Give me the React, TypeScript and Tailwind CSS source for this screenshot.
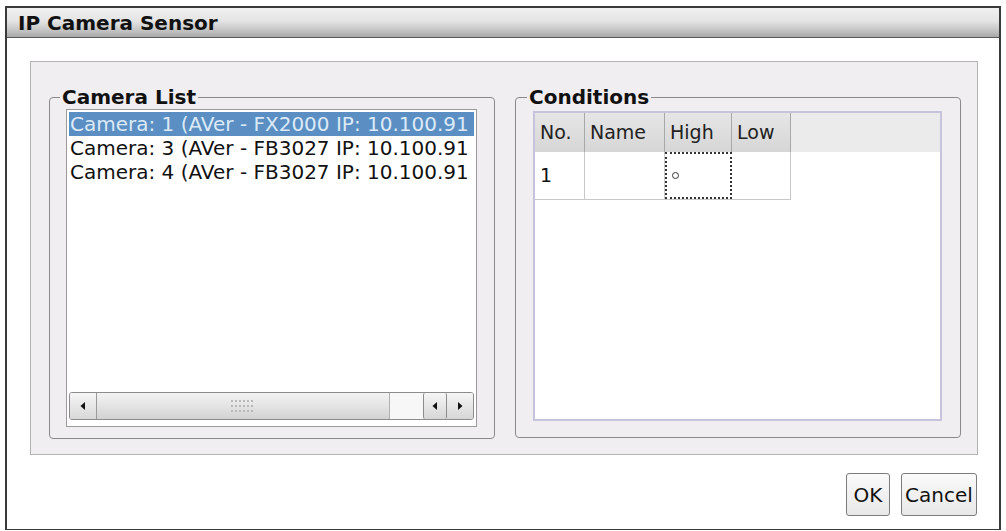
const font = "font-['DejaVu_Sans',Verdana,sans-serif]";

const cameras = [
  "Camera: 1 (AVer - FX2000 IP: 10.100.91",
  "Camera: 3 (AVer - FB3027 IP: 10.100.91",
  "Camera: 4 (AVer - FB3027 IP: 10.100.91",
];

function Arrow({ dir }: { dir: "l" | "r" }) {
  return (
    <svg width="8" height="10" viewBox="0 0 8 10">
      {dir === "l" ? <path d="M6 1 L1.5 5 L6 9 Z" fill="#111" /> : <path d="M2 1 L6.5 5 L2 9 Z" fill="#111" />}
    </svg>
  );
}

function Grip() {
  return (
    <svg width="26" height="16" viewBox="0 0 26 16">
      {[0, 1, 2].map((r) =>
        [0, 1, 2, 3, 4, 5].map((c) => (
          <rect key={`${r}-${c}`} x={1 + c * 4} y={2 + r * 5} width="2" height="2" fill="#b8b8b8" />
        ))
      )}
    </svg>
  );
}

function ScrollBar() {
  return (
    <div className="mt-auto mb-[4px] h-[28px] flex border border-[#8c8c8c] rounded-[3px] bg-[#f4f4f4] overflow-hidden">
      <div className="w-[27px] flex items-center justify-center border-r border-[#9a9a9a] bg-gradient-to-b from-[#f6f6f6] to-[#d8d8d8]">
        <Arrow dir="l" />
      </div>
      <div className="w-[293px] flex items-center justify-center border-r border-[#b0b0b0] bg-gradient-to-b from-[#f2f2f2] via-[#e4e4e4] to-[#d2d2d2]">
        <Grip />
      </div>
      <div className="flex-1 bg-[#f7f7f7]" />
      <div className="w-[24px] flex items-center justify-center border-x border-[#8c8c8c] bg-gradient-to-b from-[#f6f6f6] to-[#d6d6d6] rounded-[2px]">
        <Arrow dir="l" />
      </div>
      <div className="w-[26px] flex items-center justify-center bg-gradient-to-b from-[#f6f6f6] to-[#d6d6d6]">
        <Arrow dir="r" />
      </div>
    </div>
  );
}

function Group({ title, children, className }: { title: string; children: React.ReactNode; className?: string }) {
  return (
    <fieldset className={`w-[446px] border border-[#8a8a8a] rounded-[4px] ${className ?? ""}`}>
      <legend className="ml-[-6px] px-[2px] text-[20px] leading-[24px] font-bold text-[#111]">{title}</legend>
      {children}
    </fieldset>
  );
}

export default function App() {
  return (
    <div className={`w-[1006px] h-[531px] bg-white pt-[6px] pl-[5px] ${font}`}>
      <div className="w-[996px] h-[524px] border-x-2 border-t-2 border-b border-[#3a3a3a] flex flex-col">
        <div className="h-[30px] border-b border-[#5a5a5a] bg-[linear-gradient(to_bottom,#f0f0f0_0%,#e4e4e4_45%,#c6c6c6_75%,#a8a8a8_100%)] flex items-center pl-[11px]">
          <span className="text-[20px] font-bold text-[#111] leading-none">IP Camera Sensor</span>
        </div>

        <div className="ml-[23px] mt-[23px] w-[948px] h-[394px] bg-[#f0eef1] border border-[#b4b4b4] flex items-start gap-[20px] pl-[18px] pt-[23px]">
          <Group title="Camera List" className="pl-[16px] pb-[11px]">
            <div className="w-[411px] h-[318px] border border-[#9a9a9a] bg-white p-[2px] flex flex-col">
              {cameras.map((c, i) => (
                <div
                  key={c}
                  className={`h-[24px] px-[1px] text-[20px] leading-[24px] whitespace-nowrap ${
                    i === 0 ? "bg-[#5b8ec2] text-[#dceaf7]" : "text-[#111]"
                  }`}
                >
                  {c}
                </div>
              ))}
              <ScrollBar />
            </div>
          </Group>

          <Group title="Conditions" className="pl-[17px] pb-[16px]">
            <div className="mt-[2px] w-[409px] h-[310px] border-2 border-[#c6c4dc] bg-white flex flex-col">
              <div className="flex h-[39px] bg-[#ebebeb]">
                {[
                  ["No.", "w-[50px]"],
                  ["Name", "w-[80px]"],
                  ["High", "w-[67px]"],
                  ["Low", "w-[59px]"],
                ].map(([t, w]) => (
                  <div
                    key={t}
                    className={`${w} h-full border-r border-[#a8a8a8] bg-gradient-to-b from-[#e6e6e6] to-[#d6d6d6] flex items-center pl-[5px] text-[19px] text-[#222]`}
                  >
                    {t}
                  </div>
                ))}
              </div>
              <div className="flex h-[48px] w-[256px] border-b border-[#c8c8c8]">
                <div className="w-[50px] h-full border-r border-[#c8c8c8] flex items-center pl-[5px] text-[19px] text-[#111]">1</div>
                <div className="w-[80px] h-full border-r border-[#c8c8c8]" />
                <div className="w-[67px] h-full border-2 border-dotted border-[#333] flex items-center pl-[5px]">
                  <span className="w-[7px] h-[7px] rounded-full border border-[#333]" />
                </div>
                <div className="w-[59px] h-full border-r border-[#c8c8c8]" />
              </div>
            </div>
          </Group>
        </div>

        <div className="flex justify-end gap-[11px] pr-[22px] mt-[18px]">
          <button className="w-[44px] h-[43px] border border-[#7c7c7c] rounded-[3px] bg-gradient-to-b from-[#fafafa] to-[#e8e8e8] text-[20px] text-[#111]">
            OK
          </button>
          <button className="w-[76px] h-[43px] border border-[#7c7c7c] rounded-[3px] bg-gradient-to-b from-[#fafafa] to-[#e8e8e8] text-[20px] text-[#111]">
            Cancel
          </button>
        </div>
      </div>
    </div>
  );
}
